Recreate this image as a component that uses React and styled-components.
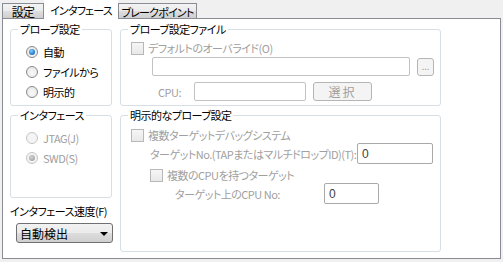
import styled, { createGlobalStyle } from "styled-components";

const GlobalStyle = createGlobalStyle`
  html, body {
    margin: 0;
    padding: 0;
    background: #f0f0f0;
  }
  body {
    font-family: "Noto Sans CJK JP", "Liberation Sans", sans-serif;
    font-size: 11px;
    letter-spacing: -0.5px;
    font-feature-settings: "palt";
    white-space: nowrap;
    color: #000;
  }
`;

const Window = styled.div`
  width: 503px;
  height: 262px;
  background: #f0f0f0;
  overflow: hidden;
`;

const TabBar = styled.div`
  display: flex;
  align-items: flex-end;
  height: 18px;
  padding-left: 2px;
  position: relative;
  z-index: 1;
`;

const Tab = styled.div`
  box-sizing: border-box;
  width: ${({ $w }) => $w}px;
  height: ${({ $active }) => ($active ? "19px" : "15px")};
  margin-bottom: ${({ $active }) => ($active ? "-1px" : "0")};
  display: flex;
  align-items: center;
  justify-content: center;
  line-height: 14px;
  letter-spacing: -0.8px;
  border: 1px solid ${({ $active }) => ($active ? "#fff" : "#898c95")};
  border-bottom: none;
  background: ${({ $active }) =>
    $active ? "#fff" : "linear-gradient(180deg, #f3f3f3 0%, #ebebeb 50%, #dedede 51%, #cfcfcf 100%)"};
  padding-top: ${({ $active }) => ($active ? "0" : "1px")};
  font-size: ${({ $big }) => ($big ? "12px" : "11px")};
`;

const Panel = styled.div`
  box-sizing: border-box;
  margin-left: 2px;
  width: 499px;
  height: 241px;
  border: 1px solid #898c95;
  background: #fff;
  display: flex;
  gap: 8px;
  padding: 3px 0 0 7px;
`;

const Column = styled.div`
  width: ${({ $w }) => $w}px;
  display: flex;
  flex-direction: column;
  gap: 2px;
`;

const Group = styled.fieldset`
  box-sizing: border-box;
  margin: 0;
  padding: 0;
  min-inline-size: 0;
  height: ${({ $h }) => $h}px;
  border: 1px solid #d5dfe5;
  border-radius: 3px;
`;

const Legend = styled.legend`
  padding: 0 2px;
  margin-left: 7px;
  line-height: 14px;
  text-align: left;
  color: #000;
`;

const GroupBody = styled.div`
  display: flex;
  flex-direction: column;
  padding: ${({ $pad }) => $pad || "6px 0 0 15px"};
`;

const RadioRow = styled.label`
  display: flex;
  align-items: center;
  gap: 5px;
  height: 20px;
  color: ${({ $disabled }) => ($disabled ? "#a0a0a0" : "#000")};
`;

const RadioDot = styled.span`
  box-sizing: border-box;
  width: 12px;
  height: 12px;
  border-radius: 50%;
  border: 1px solid ${({ $disabled }) => ($disabled ? "#c4c4c4" : "#8a8a8a")};
  background: ${({ $disabled }) =>
    $disabled ? "#f4f4f4" : "radial-gradient(circle at 50% 60%, #fafafa 0%, #e2e2e2 100%)"};
  display: flex;
  align-items: center;
  justify-content: center;

  &::after {
    content: "";
    display: ${({ $checked }) => ($checked ? "block" : "none")};
    width: 6px;
    height: 6px;
    border-radius: 50%;
    background: ${({ $disabled }) =>
      $disabled
        ? "radial-gradient(circle at 40% 35%, #d0d0d0 0%, #9a9a9a 100%)"
        : "radial-gradient(circle at 40% 35%, #7fd0ff 0%, #1d6fc2 70%, #0d4f96 100%)"};
  }
`;

const CheckRow = styled.div`
  display: flex;
  align-items: center;
  gap: 4px;
  height: 16px;
  padding-left: ${({ $indent }) => $indent}px;
  margin-top: ${({ $mt }) => $mt || 0}px;
  color: #a0a0a0;
`;

const CheckBox = styled.span`
  box-sizing: border-box;
  width: 13px;
  height: 13px;
  border: 1px solid #b8b8b8;
  background: linear-gradient(180deg, #f6f6f6 0%, #e8e8e8 100%);
`;

const FieldRow = styled.div`
  display: flex;
  align-items: center;
  padding-left: ${({ $indent }) => $indent}px;
  margin-top: ${({ $mt }) => $mt || 0}px;
  gap: ${({ $gap }) => $gap || 0}px;
`;

const FieldLabel = styled.span`
  width: ${({ $w }) => $w}px;
  flex-shrink: 0;
  color: #a0a0a0;
  line-height: 14px;
`;

const TextBox = styled.div`
  box-sizing: border-box;
  width: ${({ $w }) => $w}px;
  height: ${({ $h }) => $h || 19}px;
  border: 1px solid ${({ $enabled }) => ($enabled ? "#a9a9a9" : "#c2c2c2")};
  border-radius: 2px;
  background: #fff;
  padding-left: 4px;
  display: flex;
  align-items: center;
  color: #404040;
  font-family: "Liberation Sans", sans-serif;
  font-size: 12px;
  letter-spacing: 0;
`;

const Button = styled.div`
  box-sizing: border-box;
  width: ${({ $w }) => $w}px;
  height: ${({ $h }) => $h || 19}px;
  margin-left: ${({ $ml }) => $ml || 0}px;
  border: 1px solid #b5b5b5;
  border-radius: 3px;
  background: #f4f4f4;
  color: #a0a0a0;
  display: flex;
  align-items: center;
  justify-content: center;
  line-height: 12px;
  font-size: ${({ $small }) => ($small ? "9px" : "12px")};
  letter-spacing: ${({ $small }) => ($small ? "0" : "2px")};
`;

const SpeedLabel = styled.div`
  margin-top: 4px;
  line-height: 14px;
`;

const Combo = styled.div`
  box-sizing: border-box;
  margin: 3px 0 0 6px;
  width: 97px;
  height: 20px;
  border: 1px solid #707070;
  border-radius: 3px;
  background: linear-gradient(180deg, #f2f2f2 0%, #ebebeb 50%, #dddddd 51%, #cfcfcf 100%);
  display: flex;
  align-items: center;
  justify-content: space-between;
  padding: 0 4px 0 3px;
  font-size: 12px;
  letter-spacing: 0;
`;

const Arrow = styled.span`
  width: 0;
  height: 0;
  border-left: 4px solid transparent;
  border-right: 4px solid transparent;
  border-top: 4px solid #000;
  margin-top: 1px;
`;

function Radio({ label, checked, disabled }) {
  return (
    <RadioRow $disabled={disabled}>
      <RadioDot $checked={checked} $disabled={disabled} />
      {label}
    </RadioRow>
  );
}

export default function App() {
  return (
    <Window>
      <GlobalStyle />
      <TabBar>
        <Tab $w={42} $big>設定</Tab>
        <Tab $w={74} $active>インタフェース</Tab>
        <Tab $w={79}>ブレークポイント</Tab>
      </TabBar>
      <Panel>
        <Column $w={102}>
          <Group $h={84}>
            <Legend>プローブ設定</Legend>
            <GroupBody>
              <Radio label="自動" checked />
              <Radio label="ファイルから" />
              <Radio label="明示的" />
            </GroupBody>
          </Group>
          <Group $h={90}>
            <Legend>インタフェース</Legend>
            <GroupBody>
              <Radio label="JTAG(J)" disabled />
              <Radio label="SWD(S)" checked disabled />
            </GroupBody>
          </Group>
          <SpeedLabel>インタフェース速度(F)</SpeedLabel>
          <Combo>
            自動検出
            <Arrow />
          </Combo>
        </Column>
        <Column $w={321}>
          <Group $h={84}>
            <Legend>プローブ設定ファイル</Legend>
            <GroupBody $pad="4px 0 0 0">
              <CheckRow $indent={10}>
                <CheckBox />
                デフォルトのオーバライド(O)
              </CheckRow>
              <FieldRow $indent={31} $mt={1} $gap={7}>
                <TextBox $w={258} />
                <Button $w={17} $h={18} $small>...</Button>
              </FieldRow>
              <FieldRow $indent={37} $mt={6}>
                <FieldLabel $w={36}>CPU:</FieldLabel>
                <TextBox $w={112} />
                <Button $w={59} $ml={7}>選択</Button>
              </FieldRow>
            </GroupBody>
          </Group>
          <Group $h={144}>
            <Legend>明示的なプローブ設定</Legend>
            <GroupBody $pad="5px 0 0 0">
              <CheckRow $indent={10}>
                <CheckBox />
                複数ターゲットデバッグシステム
              </CheckRow>
              <FieldRow $indent={29}>
                <FieldLabel $w={207}>ターゲットNo.(TAPまたはマルチドロップID)(T):</FieldLabel>
                <TextBox $w={76} $h={21} $enabled>0</TextBox>
              </FieldRow>
              <CheckRow $indent={29} $mt={3}>
                <CheckBox />
                複数のCPUを持つターゲット
              </CheckRow>
              <FieldRow $indent={54}>
                <FieldLabel $w={149}>ターゲット上のCPU No:</FieldLabel>
                <TextBox $w={55} $h={21} $enabled>0</TextBox>
              </FieldRow>
            </GroupBody>
          </Group>
        </Column>
      </Panel>
    </Window>
  );
}
